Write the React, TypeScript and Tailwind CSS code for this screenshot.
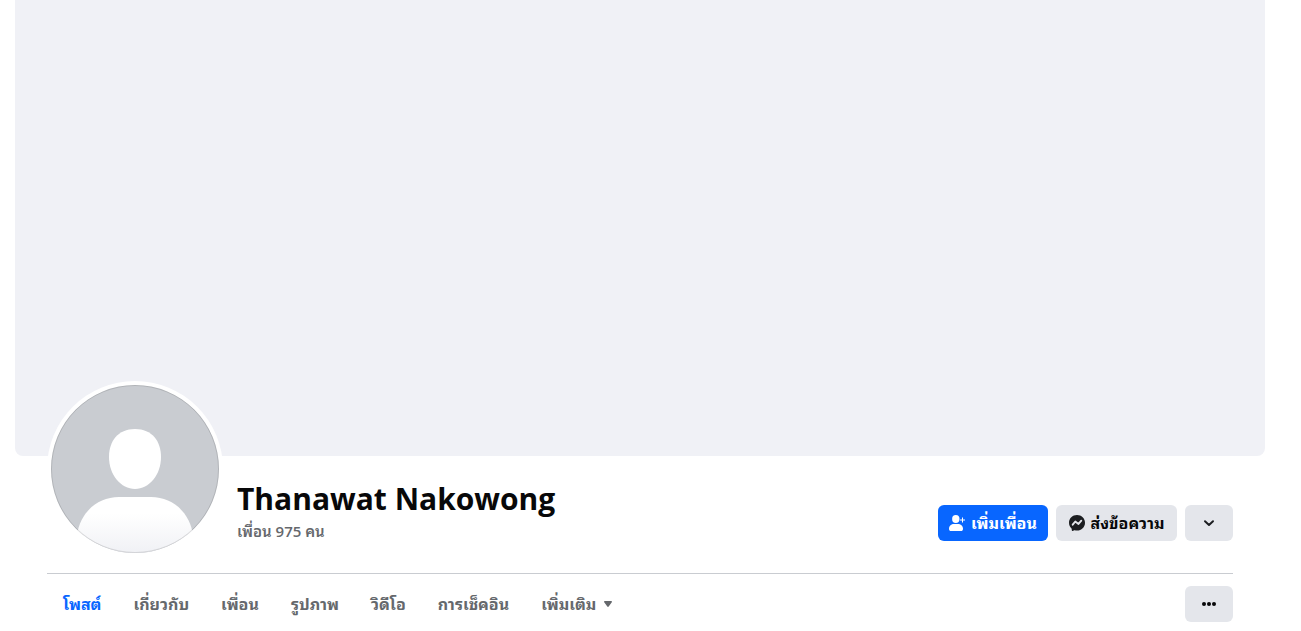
import React from 'react';

const tabs = ['โพสต์', 'เกี่ยวกับ', 'เพื่อน', 'รูปภาพ', 'วิดีโอ', 'การเช็คอิน'];

function Avatar() {
  return (
    <svg viewBox="0 0 168 168" className="block size-full" role="img" aria-label="Thanawat Nakowong">
      <defs>
        <clipPath id="avatar-clip">
          <circle cx="84" cy="84" r="84" />
        </clipPath>
        <linearGradient id="body-fill" x1="0" y1="0" x2="0" y2="1">
          <stop offset="0.3" stopColor="#ffffff" />
          <stop offset="1" stopColor="#f0f1f5" />
        </linearGradient>
      </defs>
      <g clipPath="url(#avatar-clip)">
        <rect width="168" height="168" fill="#c9ccd1" />
        <path d="M84 44C101 44 110 56 110 72C110 90 98 104 84 104S58 90 58 72C58 56 67 44 84 44Z" fill="#fff" />
        <path d="M26 150C29 128 46 112 68 112H100C122 112 139 128 142 150V168H26Z" fill="url(#body-fill)" />
      </g>
      <circle cx="84" cy="84" r="83.5" fill="none" stroke="#000" strokeOpacity="0.12" />
    </svg>
  );
}

function AddFriendIcon() {
  return (
    <svg viewBox="0 0 16 16" className="size-4 shrink-0" fill="#fff" aria-hidden="true">
      <ellipse cx="6.800" cy="4" rx="3.700" ry="4" />
      <path d="M0 13.700C0 11 2.300 9 5 9H8.800C11.600 9 14 11 14 13.700C14 15.200 13.200 16 12 16H2C.8 16 0 15.200 0 13.700Z" />
      <path d="M13 2.500H14V4.500H16V5.500H14V7.500H13V5.500H11V4.500H13Z" />
    </svg>
  );
}

function MessengerIcon() {
  return (
    <svg viewBox="0 0 16 16" className="size-4 shrink-0" aria-hidden="true">
      <path
        d="M8 0C3.500 0 0 3.300 0 7.700C0 10 1 12 2.500 13.400C2.700 13.600 2.700 13.700 2.700 13.900L2.800 15.300C2.800 15.800 3.300 16.100 3.700 15.900L5.300 15.200C5.400 15.100 5.600 15.100 5.700 15.200C6.400 15.400 7.200 15.500 8 15.500C12.500 15.500 16 12.200 16 7.700C16 3.300 12.500 0 8 0Z"
        fill="#1c1e21"
      />
      <path d="M3.700 9.700L6.300 6.500L9.500 8.900L12.300 5.700" fill="none" stroke="#e4e6eb" strokeWidth="1.900" strokeLinecap="round" strokeLinejoin="round" />
    </svg>
  );
}

export default function App() {
  return (
    <div className="bg-white pr-9 pl-[15px] font-['Open_Sans','Noto_Sans_Thai_Looped','Loma','Waree','Noto_Sans',sans-serif] text-[16px] leading-5">
      <header>
        <div className="h-[456px] rounded-b-lg bg-[#f0f1f6]" />
        <div className="px-8">
          <div className="-mt-[75px] flex items-end gap-[14px] border-b border-[#c9ccd1] pb-4">
            <div className="size-44 shrink-0 rounded-full bg-white p-1">
              <Avatar />
            </div>
            <div className="min-w-0 flex-1 pb-4">
              <h1 className="text-[30px] leading-10 font-bold text-[#080809]">Thanawat Nakowong</h1>
              <a href="#friends" className="mt-0.5 block text-[15px] font-semibold text-[#65686c]">เพื่อน 975 คน</a>
            </div>
            <div className="flex gap-2 pb-4">
              <button type="button" className="flex h-9 w-[110px] items-center justify-center gap-1.5 rounded-md bg-[#0866ff] font-bold whitespace-nowrap text-white">
                <AddFriendIcon />
                เพิ่มเพื่อน
              </button>
              <button type="button" className="flex h-9 w-[121px] items-center justify-center gap-1.5 rounded-md bg-[#e4e6eb] font-bold whitespace-nowrap text-[#080809]">
                <MessengerIcon />
                ส่งข้อความ
              </button>
              <button type="button" aria-label="ดูตัวเลือก" className="flex h-9 w-12 items-center justify-center rounded-md bg-[#e4e6eb]">
                <svg viewBox="0 0 16 16" className="size-4" fill="none" stroke="#1c1e21" strokeWidth="2" strokeLinecap="round" strokeLinejoin="round" aria-hidden="true">
                  <path d="M4 6.300L8 10L12 6.300" />
                </svg>
              </button>
            </div>
          </div>
          <div className="flex items-center justify-between">
            <nav className="flex h-[60px] items-center font-bold text-[#65686c]">
              {tabs.map((tab, i) => (
                <a key={tab} href={`#tab-${i}`} className={i === 0 ? 'px-4 text-[#0866ff]' : 'px-4'} aria-current={i === 0 ? 'page' : undefined}>
                  {tab}
                </a>
              ))}
              <button type="button" className="flex items-center gap-2 px-4">
                เพิ่มเติม
                <svg viewBox="0 0 8 6" className="h-[6px] w-2" fill="#65686c" aria-hidden="true">
                  <path d="M.8 0H7.200C7.900 0 8.200.7 7.800 1.200L4.700 5.500C4.300 6.100 3.700 6.100 3.300 5.500L.2 1.200C-.2.7.1 0 .8 0Z" />
                </svg>
              </button>
            </nav>
            <button type="button" aria-label="เพิ่มเติม" className="flex h-9 w-12 items-center justify-center rounded-md bg-[#e4e6eb]">
              <svg viewBox="0 0 16 16" className="size-4" fill="#080809" aria-hidden="true">
                <circle cx="3" cy="8" r="2" />
                <circle cx="8" cy="8" r="2" />
                <circle cx="13" cy="8" r="2" />
              </svg>
            </button>
          </div>
        </div>
      </header>
    </div>
  );
}
